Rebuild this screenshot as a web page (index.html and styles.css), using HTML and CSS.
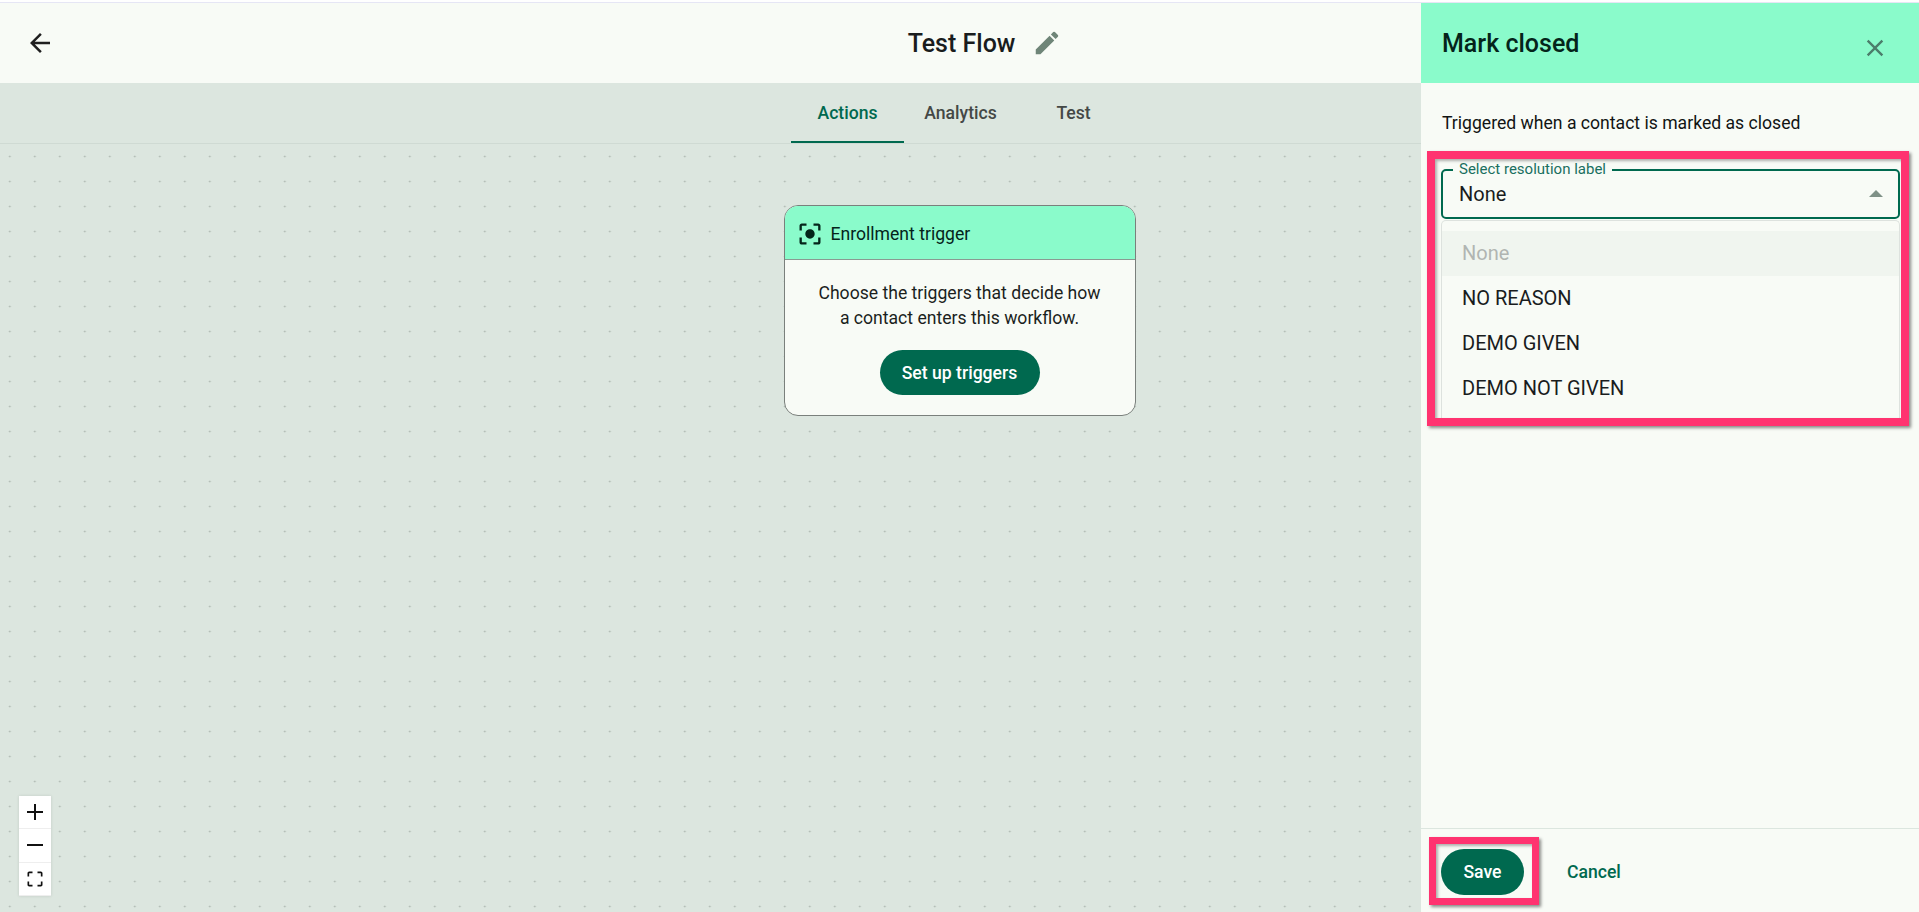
FILE: index.html
```html
<!DOCTYPE html>
<html lang="en">
<head>
  <meta charset="UTF-8" />
  <title>Test Flow</title>
  <link rel="stylesheet" href="styles.css">
</head>
<body>
  <div class="app">
    <header class="topbar">
      <button class="icon-btn back-btn" aria-label="Back">
        <svg width="30" height="30" viewBox="0 0 24 24"><path fill="#1f1f1f" d="M20 11H7.830l5.590-5.590L12 4l-8 8 8 8 1.410-1.410L7.830 13H20v-2z"/></svg>
      </button>
      <h1 class="flow-title">Test Flow</h1>
      <button class="icon-btn edit-btn" aria-label="Edit">
        <svg width="30" height="30" viewBox="0 0 24 24"><path fill="#6f8578" d="M3 17.25V21h3.75L17.81 9.94l-3.75-3.75L3 17.25zM20.71 7.04c.39-.39.39-1.02 0-1.41l-2.34-2.34a.9959.9959 0 0 0-1.41 0l-1.83 1.83 3.75 3.75 1.83-1.83z"/></svg>
      </button>
    </header>

    <nav class="tabs">
      <a class="tab active">Actions</a>
      <a class="tab">Analytics</a>
      <a class="tab">Test</a>
    </nav>

    <main class="canvas">
      <div class="trigger-card">
        <div class="trigger-head">
          <svg width="28" height="28" viewBox="0 0 24 24"><path fill="#04241a" d="M12 8c-2.21 0-4 1.79-4 4s1.79 4 4 4 4-1.79 4-4-1.790-4-4-4zm-7 7H3v4c0 1.100.9 2 2 2h4v-2H5v-4zM5 5h4V3H5c-1.100 0-2 .9-2 2v4h2V5zm14-2h-4v2h4v4h2V5c0-1.100-.9-2-2-2zm0 16h-4v2h4c1.100 0 2-.9 2-2v-4h-2v4z"/></svg>
          <span>Enrollment trigger</span>
        </div>
        <div class="trigger-body">
          <p>Choose the triggers that decide how<br>a contact enters this workflow.</p>
          <button class="btn-primary setup-btn">Set up triggers</button>
        </div>
      </div>

      <div class="zoom-controls">
        <button aria-label="Zoom in"><svg width="16" height="16" viewBox="0 0 16 16"><path d="M8 0v16M0 8h16" stroke="#111" stroke-width="2"/></svg></button>
        <button aria-label="Zoom out"><svg width="16" height="16" viewBox="0 0 16 16"><path d="M0 8h16" stroke="#111" stroke-width="2"/></svg></button>
        <button aria-label="Fit view"><svg width="20" height="20" viewBox="0 0 24 24"><path fill="#111" d="M5 15H3v4c0 1.100.9 2 2 2h4v-2H5v-4zM5 5h4V3H5c-1.100 0-2 .9-2 2v4h2V5zm14-2h-4v2h4v4h2V5c0-1.100-.9-2-2-2zm0 16h-4v2h4c1.100 0 2-.9 2-2v-4h-2v4z"/></svg></button>
      </div>
    </main>

    <aside class="panel">
      <div class="panel-head">
        <h2>Mark closed</h2>
        <button class="icon-btn close-btn" aria-label="Close">
          <svg width="28" height="28" viewBox="0 0 24 24"><path fill="#4b7d6b" d="M19 6.410 17.590 5 12 10.590 6.410 5 5 6.410 10.590 12 5 17.590 6.410 19 12 13.410 17.590 19 19 17.590 13.410 12z"/></svg>
        </button>
      </div>

      <div class="panel-body">
        <p class="panel-desc">Triggered when a contact is marked as closed</p>
        <div class="select">
          <span class="select-label">Select resolution label</span>
          <span class="select-value">None</span>
          <span class="select-arrow"></span>
        </div>
        <ul class="select-menu">
          <li class="selected">None</li>
          <li>NO REASON</li>
          <li>DEMO GIVEN</li>
          <li>DEMO NOT GIVEN</li>
        </ul>
      </div>

      <div class="panel-foot">
        <button class="btn-primary save-btn">Save</button>
        <a class="cancel-link">Cancel</a>
      </div>

      <div class="mark mark-select"></div>
      <div class="mark mark-save"></div>
    </aside>
  </div>
</body>
</html>
```

FILE: styles.css
```css
* {
  box-sizing: border-box;
}
html, body {
  margin: 0;
  height: 100%;
  overflow: hidden;
}
body {
  font-family: Roboto, "Liberation Sans", sans-serif;
  font-size: 17.6px;
  color: #1b1f1d;
  background: #fff;
}
button {
  font-family: inherit;
  border: none;
  background: none;
  padding: 0;
  cursor: pointer;
}
.app {
  position: relative;
  height: 100%;
  padding-top: 2px;
  display: flex;
  flex-direction: column;
}
.icon-btn {
  display: flex;
  align-items: center;
  justify-content: center;
}

/* top bar */
.topbar {
  height: 81px;
  flex: none;
  display: grid;
  grid-template-columns: 1fr auto 1fr;
  align-items: center;
  padding-left: 4px;
  background: #f8fbf6;
  border-top: 1px solid #e6e6f5;
}
.back-btn {
  justify-self: start;
  margin-left: 21px;
}
.flow-title {
  margin: 0;
  font-size: 25px;
  font-weight: 500;
  color: #191c1d;
}
.edit-btn {
  justify-self: start;
  margin-left: 17px;
}

/* tabs */
.tabs {
  height: 61px;
  flex: none;
  display: flex;
  justify-content: center;
  padding-left: 2px;
  background: #dce6df;
  border-bottom: 1px solid #cfdad3;
}
.tab {
  width: 113px;
  display: flex;
  align-items: center;
  justify-content: center;
  font-weight: 500;
  color: #444846;
  padding-top: 1px;
  padding-bottom: 2px;
}
.tab.active {
  color: #00694f;
  border-bottom: 2px solid #00694f;
  padding-bottom: 0;
}

/* canvas */
.canvas {
  position: relative;
  flex: 1;
  padding-top: 61px;
  background-color: #dce6df;
  background-image: radial-gradient(circle, #aab5ae 0.8px, transparent 1.1px);
  background-size: 25px 25px;
  background-position: -2.7px 0;
}
.trigger-card {
  width: 352px;
  height: 211px;
  margin: 0 auto;
  background: #f8fbf6;
  border: 1px solid #7a807c;
  border-radius: 14px;
  overflow: hidden;
}
.trigger-head {
  height: 54px;
  display: flex;
  align-items: center;
  gap: 7px;
  padding-left: 11px;
  padding-top: 2px;
  background: #8afbcb;
  border-bottom: 1px solid #8a9a92;
  color: #04241a;
}
.trigger-body {
  text-align: center;
}
.trigger-body p {
  margin: 0;
  padding-top: 21px;
  line-height: 25px;
  color: #1b1f1d;
}
.btn-primary {
  color: #fff;
  background: #00694f;
  font-size: 17.6px;
  font-weight: 500;
  border-radius: 23px;
}
.setup-btn {
  width: 160px;
  height: 45px;
  margin-top: 19px;
}
.zoom-controls {
  position: absolute;
  left: 19px;
  bottom: 16px;
  width: 32px;
  display: flex;
  flex-direction: column;
  background: #fff;
  box-shadow: 0 0 3px rgba(0, 0, 0, 0.12);
}
.zoom-controls button {
  height: 33.5px;
  display: flex;
  align-items: center;
  justify-content: center;
  border-bottom: 1px solid #eee;
}

/* right panel */
.panel {
  position: absolute;
  top: 3px;
  right: 0;
  bottom: 0;
  width: 498px;
  display: flex;
  flex-direction: column;
  background: #f8fbf6;
}
.panel-head {
  height: 80px;
  flex: none;
  display: flex;
  align-items: center;
  justify-content: space-between;
  padding: 0 30px 0 21px;
  background: #8afbcb;
}
.panel-head h2 {
  margin: 1px 0 0;
  font-size: 25px;
  font-weight: 500;
  color: #04241a;
}
.close-btn {
  margin-top: 9px;
}
.panel-body {
  flex: 1;
  padding: 28px 19px 0 20px;
}
.panel-desc {
  margin: 0 0 34px 1px;
  line-height: 24px;
  color: #111413;
}
.select {
  position: relative;
  height: 50px;
  padding-left: 16px;
  display: flex;
  align-items: center;
  border: 2px solid #00694f;
  border-radius: 5px;
}
.select-label {
  position: absolute;
  top: -10px;
  left: 10px;
  padding: 0 6px;
  font-size: 15px;
  line-height: 16px;
  color: #1a6f5f;
  background: #f8fbf6;
}
.select-value {
  font-size: 20px;
  color: #191c1d;
}
.select-arrow {
  position: absolute;
  right: 15px;
  top: 19px;
  border-left: 7px solid transparent;
  border-right: 7px solid transparent;
  border-bottom: 7px solid #7f9187;
}
.select-menu {
  list-style: none;
  height: 199px;
  margin: 1px 0 0;
  padding: 10px 0 0;
  overflow: hidden;
  border: 1px solid #dde2de;
  border-bottom: none;
  border-radius: 5px 5px 0 0;
}
.select-menu li {
  height: 45px;
  line-height: 45px;
  padding-left: 20px;
  font-size: 20px;
  color: #191c1d;
}
.select-menu li.selected {
  color: #b1b5b2;
  background: #f0f5ef;
}
.panel-foot {
  height: 84px;
  flex: none;
  display: flex;
  align-items: center;
  gap: 43px;
  padding-left: 20px;
  padding-top: 2px;
  border-top: 1px solid #dce6df;
}
.save-btn {
  width: 83px;
  height: 46px;
}
.cancel-link {
  color: #00694f;
  font-weight: 500;
}

/* red annotation boxes drawn over the screenshot */
.mark {
  position: absolute;
  border: 8px solid #ff3370;
  box-shadow: 2px 2px 3px rgba(0, 0, 0, 0.45), inset 2px 2px 3px rgba(0, 0, 0, 0.3);
  pointer-events: none;
}
.mark-select {
  left: 6px;
  top: 148px;
  width: 482px;
  height: 275px;
}
.mark-save {
  left: 8px;
  top: 834px;
  width: 110px;
  height: 68px;
  border-width: 7px;
}
```
